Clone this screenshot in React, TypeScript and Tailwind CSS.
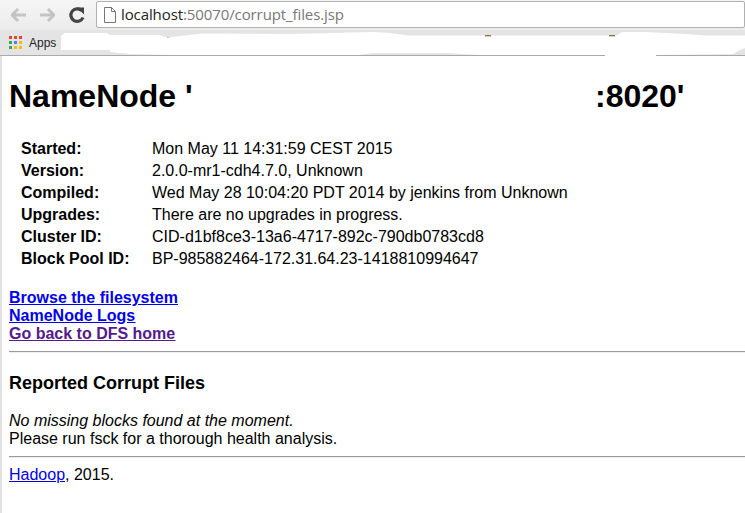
const rows = [
  ["Started:", "Mon May 11 14:31:59 CEST 2015"],
  ["Version:", "2.0.0-mr1-cdh4.7.0, Unknown"],
  ["Compiled:", "Wed May 28 10:04:20 PDT 2014 by jenkins from Unknown"],
  ["Upgrades:", "There are no upgrades in progress."],
  ["Cluster ID:", "CID-d1bf8ce3-13a6-4717-892c-790db0783cd8"],
  ["Block Pool ID:", "BP-985882464-172.31.64.23-1418810994647"],
];

function Nav() {
  return (
    <div className="flex items-start pt-[1px] h-[30px] bg-gradient-to-b from-[#f6f6f6] to-[#ebebeb]">
      <svg width="96" height="28" viewBox="0 0 96 28" className="shrink-0">
        <path d="M11 14h15M12 14l6-6M12 14l6 6" fill="none" stroke="#c4c4c4" strokeWidth="3" />
        <path d="M55 14H40M54 14l-6-6M54 14l-6 6" fill="none" stroke="#c4c4c4" strokeWidth="3" />
        <path d="M81.500 9.500a6.300 6.300 0 1 0 1.500 7" fill="none" stroke="#444" strokeWidth="3.200" />
        <path d="M77 6.500h7v7z" fill="#444" />
      </svg>
      <div className="flex items-center h-[27px] w-[660px] border border-[#b0b0b0] rounded-[2px] bg-white">
        <svg width="12" height="16" viewBox="0 0 12 16" className="ml-[7px] shrink-0">
          <path d="M.500.500h7l4 4v11h-11zM7.500.500v4h4" fill="#fff" stroke="#777" />
        </svg>
        <span className="ml-[5px] text-[15px] font-['Open_Sans',sans-serif] tracking-[-0.1px] text-[#777]">
          <span className="text-[#222]">localhost</span>:50070/corrupt_files.jsp
        </span>
      </div>
    </div>
  );
}

function Bookmarks() {
  const colors = ["#ea4335", "#ea4335", "#ea4335", "#34a853", "#4285f4", "#fbbc05", "#34a853", "#fbbc05", "#fbbc05"];
  return (
    <div className="relative flex items-center h-[26px] bg-[#e4e4e4] border-b border-[#a9a9a9] pl-[9px]">
      <div className="grid grid-cols-3 gap-[2px] w-[13px] shrink-0">
        {colors.map((c, i) => (
          <div key={i} className="h-[3px] w-[3px]" style={{ background: c }} />
        ))}
      </div>
      <span className="ml-[7px] text-[12px] text-[#222] font-['Liberation_Sans',sans-serif]">Apps</span>
      <svg width="745" height="26" viewBox="0 30 745 26" className="absolute left-0 top-0">
        <path d="M167 37h3v1h-3zM485 35h6v1.500h-6zM609 35h6v1.500h-6z" fill="#8a6a4a" />
        <path
          d="M61 36L65 33 107 33 110 35 160 35 167 37.500 203 33.500 290 34 372 32 390 33 408 35.500 485 35.500 485 36.500 491 36.500 491 35.500 609 35.500 609 36.500 615 36.500 622 32 645 32 685 34 705 35.500 745 35.500 745 48 740 50 733 54 656 55 656 56 605 56 605 55 480 55 445 53 372 53 360 55 173 55 130 54 110 52 110 50 61 50z"
          fill="#fff"
        />
      </svg>
    </div>
  );
}

export default function App() {
  return (
    <div className="h-[513px] w-[745px] overflow-hidden bg-white font-['Liberation_Sans',sans-serif] text-black">
      <Nav />
      <Bookmarks />
      <div className="border-l-2 border-[#e2e2e2] pl-[7px] h-[457px]">
        <h1 className="flex pt-[22px] text-[32px] leading-[37px] font-bold">
          <span className="w-[586px]">NameNode '</span>
          <span>:8020'</span>
        </h1>
        <div className="mt-[23px] flex flex-col pl-[12px] text-[16px] leading-[22px]">
          {rows.map(([k, v]) => (
            <div key={k} className="flex">
              <span className="w-[131px] font-bold">{k}</span>
              <span>{v}</span>
            </div>
          ))}
        </div>
        <div className="mt-[19px] flex flex-col items-start text-[16px] leading-[18px] font-bold underline">
          <a className="text-[#0000ee]">Browse the filesystem</a>
          <a className="text-[#0000ee]">NameNode Logs</a>
          <a className="text-[#551a8b]">Go back to DFS home</a>
        </div>
        <div className="mt-[8px] h-[2px] border-t border-b border-t-[#9a9a9a] border-b-[#eeeeee]" />
        <h3 className="mt-[20px] text-[18px] leading-[21px] font-bold">Reported Corrupt Files</h3>
        <p className="mt-[18px] text-[16px] leading-[18px] italic">No missing blocks found at the moment.</p>
        <p className="text-[16px] leading-[18px]">Please run fsck for a thorough health analysis.</p>
        <div className="mt-[8px] h-[2px] border-t border-b border-t-[#9a9a9a] border-b-[#eeeeee]" />
        <p className="mt-[8px] text-[16px] leading-[18px]">
          <a className="text-[#0000ee] underline">Hadoop</a>, 2015.
        </p>
      </div>
    </div>
  );
}
